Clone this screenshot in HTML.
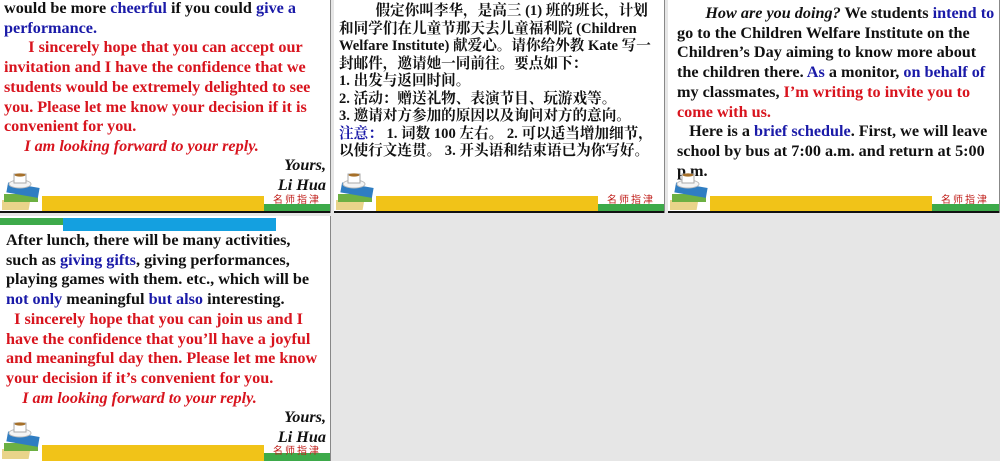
<!DOCTYPE html>
<html><head><meta charset="utf-8"><style>
body{margin:0;width:1000px;height:461px;background:#e6e6e6;position:relative;overflow:hidden;font-family:"Liberation Serif","Noto Serif CJK SC",serif;}
.p{position:absolute;background:#fff;overflow:hidden;border-right:1px solid #888;}
.t{position:absolute;font-weight:bold;font-size:16.2px;line-height:19.7px;white-space:nowrap;color:#111;}
.b{color:#1a1aa8}.r{color:#d8141e}.i{font-style:italic}
.y{position:absolute;background:#f1c318;height:16px;}
.g{position:absolute;background:#3daa4a;height:8px;}
.ln{position:absolute;height:2px;background:#111;}
.mz{position:absolute;font-family:"Noto Sans CJK SC",sans-serif;font-size:10px;color:#c0201c;letter-spacing:2px;line-height:11px;}
.cn{position:absolute;font-weight:bold;font-size:14.6px;line-height:17.5px;white-space:nowrap;color:#111;font-family:"Liberation Serif","Noto Serif CJK SC",serif;}
</style></head><body>

<svg width="0" height="0" style="position:absolute"><defs>
<g id="bk">
<rect x="4" y="32" width="30" height="10" fill="#e9d48a" transform="skewX(-10)"/>
<rect x="2" y="26" width="34" height="8" fill="#6cb043"/>
<rect x="5" y="17" width="32" height="10" fill="#2f7dc2" transform="rotate(10 20 22)"/>
<ellipse cx="18" cy="16" rx="11" ry="4" fill="#f4f4f4" stroke="#bbb"/>
<rect x="12" y="6" width="12" height="9" fill="#fff" stroke="#aaa"/>
<ellipse cx="18" cy="7" rx="5.5" ry="1.6" fill="#a6702a"/>
</g></defs></svg>

<div class="p" style="left:0;top:0;width:330px;height:213px;">
<div class="t" style="left:4px;top:-1px;">would be more <span class="b">cheerful</span> if you could <span class="b">give a</span><br><span class="b">performance.</span><br><span class="r">&nbsp;&nbsp;&nbsp;&nbsp;&nbsp;&nbsp;I sincerely hope that you can accept our<br>invitation and I have the confidence that we<br>students would be extremely delighted to see<br>you. Please let me know your decision if it is<br>convenient for you.<br><span class="i">&nbsp;&nbsp;&nbsp;&nbsp;&nbsp;I am looking forward to your reply.</span></span></div>
<div class="t i" style="right:4px;top:156px;text-align:right;">Yours,<br>Li Hua</div>
<div class="y" style="left:42px;top:196px;width:222px;"></div>
<div class="g" style="left:264px;top:204px;width:66px;"></div>
<div class="mz" style="left:273px;top:193px;">名师指津</div>
<div class="ln" style="left:0;top:211px;width:330px;"></div>
<svg style="position:absolute;left:2px;top:168px" width="42" height="44"><use href="#bk"/></svg>
</div>

<div class="p" style="left:334px;top:0;width:330px;height:213px;">
<div class="cn" style="left:5px;top:3px;">&nbsp;&nbsp;&nbsp;&nbsp;&nbsp;&nbsp;&nbsp;&nbsp;&nbsp;&nbsp;假定你叫李华，是高三 (1) 班的班长，计划<br>和同学们在儿童节那天去儿童福利院 (Children<br>Welfare Institute) 献爱心。请你给外教 Kate 写一<br>封邮件，邀请她一同前往。要点如下：<br>1. 出发与返回时间。<br>2. 活动：赠送礼物、表演节目、玩游戏等。<br>3. 邀请对方参加的原因以及询问对方的意向。<br><span class="b">注意：</span> 1. 词数 100 左右。 2. 可以适当增加细节，<br>以使行文连贯。 3. 开头语和结束语已为你写好。</div>
<div class="y" style="left:42px;top:196px;width:222px;"></div>
<div class="g" style="left:264px;top:204px;width:66px;"></div>
<div class="mz" style="left:273px;top:193px;">名师指津</div>
<div class="ln" style="left:0;top:211px;width:330px;"></div>
<svg style="position:absolute;left:2px;top:168px" width="42" height="44"><use href="#bk"/></svg>
</div>

<div class="p" style="left:668px;top:0;width:331px;height:213px;">
<div class="t" style="left:9px;top:4px;">&nbsp;&nbsp;&nbsp;&nbsp;&nbsp;&nbsp;&nbsp;<span class="i">How are you doing?</span> We students <span class="b">intend to</span><br>go to the Children Welfare Institute on the<br>Children’s Day aiming to know more about<br>the children there. <span class="b">As</span> a monitor, <span class="b">on behalf of</span><br>my classmates, <span class="r">I’m writing to invite you to<br>come with us.</span><br>&nbsp;&nbsp;&nbsp;Here is a <span class="b">brief schedule</span>. First, we will leave<br>school by bus at 7:00 a.m. and return at 5:00<br>p.m.</div>
<div class="y" style="left:42px;top:196px;width:222px;"></div>
<div class="g" style="left:264px;top:204px;width:67px;"></div>
<div class="mz" style="left:273px;top:193px;">名师指津</div>
<div class="ln" style="left:0;top:211px;width:331px;"></div>
<svg style="position:absolute;left:2px;top:168px" width="42" height="44"><use href="#bk"/></svg>
</div>

<div class="p" style="left:0;top:216px;width:330px;height:245px;">
<div style="position:absolute;left:0;top:2px;width:63px;height:7px;background:#3daa4a"></div>
<div style="position:absolute;left:63px;top:2px;width:213px;height:13px;background:#14a0e0"></div>
<div class="t" style="left:6px;top:15px;">After lunch, there will be many activities,<br>such as <span class="b">giving gifts</span>, giving performances,<br>playing games with them. etc., which will be<br><span class="b">not only</span> meaningful <span class="b">but also</span> interesting.<br><span class="r">&nbsp;&nbsp;I sincerely hope that you can join us and I<br>have the confidence that you’ll have a joyful<br>and meaningful day then. Please let me know<br>your decision if it’s convenient for you.<br><span class="i">&nbsp;&nbsp;&nbsp;&nbsp;I am looking forward to your reply.</span></span></div>
<div class="t i" style="right:4px;top:192px;text-align:right;">Yours,<br>Li Hua</div>
<div class="y" style="left:42px;top:229px;width:222px;"></div>
<div class="g" style="left:264px;top:237px;width:66px;"></div>
<div class="mz" style="left:273px;top:228px;">名师指津</div>
<svg style="position:absolute;left:2px;top:201px" width="42" height="44"><use href="#bk"/></svg>
</div>
</body></html>
